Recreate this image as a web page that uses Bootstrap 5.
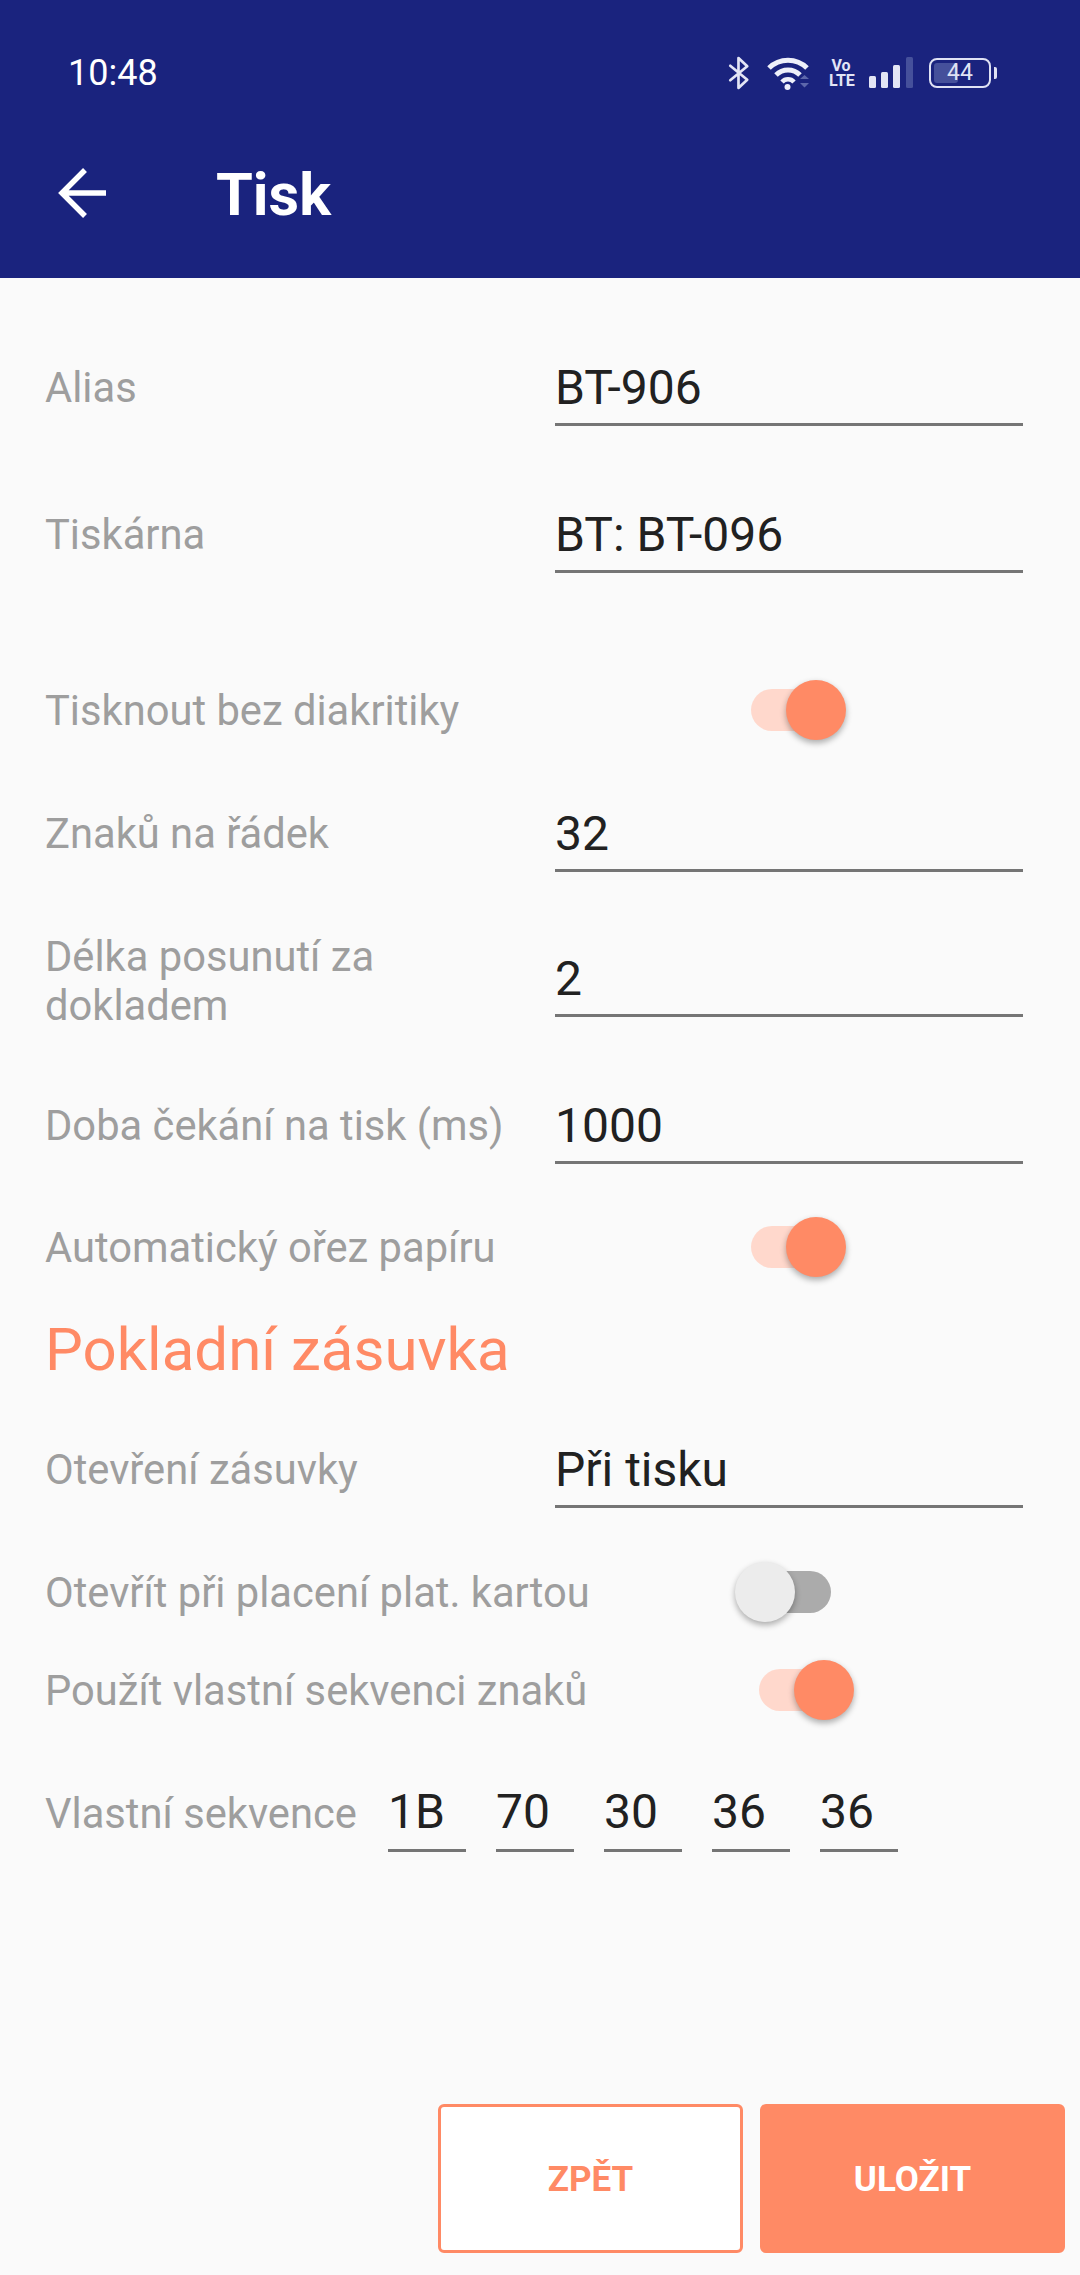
<!DOCTYPE html>
<html lang="cs">
<head>
    <meta charset="UTF-8">
    <meta name="viewport" content="width=device-width, initial-scale=1.0">
    <title>Tisk</title>
    <link href="https://cdn.jsdelivr.net/npm/bootstrap@5.3.0/dist/css/bootstrap.min.css" rel="stylesheet">
    <style>
        html, body { margin: 0; height: 2275px; background: #fafafa; font-family: Roboto, "Liberation Sans", sans-serif; }
        .screen { height: 2275px; overflow: hidden; }

        /* Header */
        .app-head { background: #1a237e; height: 278px; color: #fff; }
        .status-line { height: 145px; padding: 0 82px 0 68px; }
        .clock { font-size: 36px; line-height: 1; }
        .status-icons { margin-right: 1px; }
        .volte { font-size: 16px; font-weight: 700; line-height: 15px; text-align: center; width: 24px; margin-left: 20px; color: #e3e5f5; }
        .batt { position: relative; width: 62px; height: 30px; border: 2px solid #dfe2f4; border-radius: 8px; font-size: 23px; line-height: 26px; text-align: center; color: #dfe2f4; overflow: hidden; }
        .batt-fill { position: absolute; left: 3px; top: 3px; bottom: 3px; width: 24px; background: #45509b; border-radius: 3px; }
        .batt-num { position: relative; }
        .batt-tip { width: 3px; height: 12px; background: #dfe2f4; border-radius: 0 2px 2px 0; margin-left: 3px; }
        .tool-line { height: 96px; padding-left: 58px; }
        .tool-title { font-size: 59.500px; font-weight: 700; line-height: 1; margin: 5px 0 0 110px; }

        /* Form rows */
        .form-area { padding: 0 57px 0 45px; }
        .line-row { height: 90px; }
        .tall-row { height: 100px; }
        .sw-row { height: 60px; }
        .lbl { color: #9e9e9e; font-size: 41.700px; line-height: 49px; white-space: nowrap; }
        .lbl-fixed { width: 510px; flex: none; }
        .lbl-line { margin-top: 13px; }
        .lbl-low { margin-bottom: -13px; }
        .lbl-seq { width: 343px; flex: none; }
        .fld { color: #212121; font-size: 48px; line-height: 54px; border-bottom: 3px solid #757575; height: 90px; padding-top: 25px; }
        .fld-wide { flex: 1 1 auto; }
        .fld-hex { width: 78px; flex: none; margin-right: 30px; padding-top: 23px; }
        .section-title { color: #ff8a65; font-size: 60px; font-weight: 400; line-height: 70px; margin: 38px 0 33px; }

        .gap-a { margin-top: 58px; }
        .gap-b { margin-top: 57px; }
        .gap-c { margin-top: 107px; }
        .gap-d { margin-top: 42px; }
        .gap-e { margin-top: 45px; }
        .gap-f { margin-top: 53px; }
        .gap-g { margin-top: 54px; }
        .gap-h { margin-top: 38px; }
        .gap-i { margin-top: 42px; }

        /* Switches */
        .sw { position: relative; width: 84px; height: 42px; border-radius: 21px; background: #ffd8cc; margin-left: auto; }
        .sw-thumb { position: absolute; top: -9px; width: 60px; height: 60px; border-radius: 50%; background: #ff8a65; box-shadow: 0 3px 6px rgba(0,0,0,.32); }
        .sw-on .sw-thumb { right: -11px; }
        .sw-off { background: #ababab; }
        .sw-off .sw-thumb { left: -12px; background: #ececec; }
        .sw-pos-a { margin-right: 188px; }
        .sw-pos-b { margin-right: 192px; }
        .sw-pos-c { margin-right: 180px; }

        /* Footer buttons */
        .foot-btns { padding: 0 15px 22px 0; gap: 17px; }
        .act-btn { width: 305px; height: 149px; border-radius: 6px; font-size: 35px; font-weight: 700; border: 3px solid #ff8a65; padding-top: 9px; }
        .act-back { background: #fff; color: #ff8a65; }
        .act-save { background: #ff8a65; color: #fff; }
    </style>
</head>
<body>
    <div class="screen d-flex flex-column">
        <!-- Header -->
        <header class="app-head">
            <div class="status-line d-flex align-items-center justify-content-between">
                <span class="clock">10:48</span>
                <div class="status-icons d-flex align-items-center">
                    <svg width="24" height="34" viewBox="0 0 21 33" fill="none" stroke="#e3e5f5" stroke-width="2.600" stroke-linejoin="round" stroke-linecap="round"><path d="M2 9.500 18.500 23 10 31V2l8.500 8L2 23.500"/></svg>
                    <svg class="ms-3" width="42" height="34" viewBox="0 0 42 34" fill="none"><path d="M2 12a27 27 0 0 1 38 0" stroke="#eef0fa" stroke-width="5"/><path d="M9 19a17 17 0 0 1 24 0" stroke="#eef0fa" stroke-width="5"/><path d="M15 26a8 8 0 0 1 12 0" stroke="#eef0fa" stroke-width="4.500"/><circle cx="20.500" cy="31" r="3" fill="#eef0fa"/><path d="M33 23l4.500-4 4.500 4zM33 27l4.500 4.500 4.500-4.500z" fill="#5d67ab"/></svg>
                    <div class="volte">Vo<br>LTE</div>
                    <svg class="ms-3" width="44" height="31" viewBox="0 0 44 31"><rect x="0" y="19" width="7" height="12" rx="1.500" fill="#e3e5f5"/><rect x="12" y="15" width="7" height="16" rx="1.500" fill="#e3e5f5"/><rect x="24" y="8" width="7" height="23" rx="1.500" fill="#e3e5f5"/><rect x="37" y="0" width="7" height="31" rx="1.500" fill="#45509b"/></svg>
                    <div class="batt ms-3"><span class="batt-fill"></span><span class="batt-num">44</span></div>
                    <span class="batt-tip"></span>
                </div>
            </div>
            <div class="tool-line d-flex align-items-center">
                <svg width="48" height="50" viewBox="0 0 48 50" fill="none" stroke="#fff" stroke-width="5.500"><path d="M48 25H4M27 2 4 25l23 23"/></svg>
                <h1 class="tool-title">Tisk</h1>
            </div>
        </header>

        <!-- Printer settings -->
        <main class="form-area">
            <div class="line-row d-flex align-items-center gap-a">
                <div class="lbl lbl-fixed lbl-line">Alias</div>
                <div class="fld fld-wide">BT-906</div>
            </div>
            <div class="line-row d-flex align-items-center gap-b">
                <div class="lbl lbl-fixed lbl-line">Tiskárna</div>
                <div class="fld fld-wide">BT: BT-096</div>
            </div>
            <div class="sw-row d-flex align-items-center gap-c">
                <div class="lbl">Tisknout bez diakritiky</div>
                <div class="sw sw-on sw-pos-a"><span class="sw-thumb"></span></div>
            </div>
            <div class="line-row d-flex align-items-center gap-d">
                <div class="lbl lbl-fixed lbl-line">Znaků na řádek</div>
                <div class="fld fld-wide">32</div>
            </div>
            <div class="tall-row d-flex align-items-end gap-e">
                <div class="lbl lbl-fixed lbl-low">Délka posunutí za<br>dokladem</div>
                <div class="fld fld-wide">2</div>
            </div>
            <div class="line-row d-flex align-items-center gap-b">
                <div class="lbl lbl-fixed lbl-line">Doba čekání na tisk (ms)</div>
                <div class="fld fld-wide">1000</div>
            </div>
            <div class="sw-row d-flex align-items-center gap-f">
                <div class="lbl">Automatický ořez papíru</div>
                <div class="sw sw-on sw-pos-a"><span class="sw-thumb"></span></div>
            </div>

            <h2 class="section-title">Pokladní zásuvka</h2>

            <div class="line-row d-flex align-items-center">
                <div class="lbl lbl-fixed lbl-line">Otevření zásuvky</div>
                <div class="fld fld-wide">Při tisku</div>
            </div>
            <div class="sw-row d-flex align-items-center gap-g">
                <div class="lbl">Otevřít při placení plat. kartou</div>
                <div class="sw sw-off sw-pos-b"><span class="sw-thumb"></span></div>
            </div>
            <div class="sw-row d-flex align-items-center gap-h">
                <div class="lbl">Použít vlastní sekvenci znaků</div>
                <div class="sw sw-on sw-pos-c"><span class="sw-thumb"></span></div>
            </div>
            <div class="line-row d-flex align-items-center gap-i">
                <div class="lbl lbl-seq lbl-line">Vlastní sekvence</div>
                <div class="fld fld-hex">1B</div>
                <div class="fld fld-hex">70</div>
                <div class="fld fld-hex">30</div>
                <div class="fld fld-hex">36</div>
                <div class="fld fld-hex">36</div>
            </div>
        </main>

        <!-- Buttons -->
        <footer class="foot-btns d-flex justify-content-end mt-auto">
            <button type="button" class="btn act-btn act-back">ZPĚT</button>
            <button type="button" class="btn act-btn act-save">ULOŽIT</button>
        </footer>
    </div>

    <script src="https://cdn.jsdelivr.net/npm/bootstrap@5.3.0/dist/js/bootstrap.bundle.min.js"></script>
</body>
</html>
